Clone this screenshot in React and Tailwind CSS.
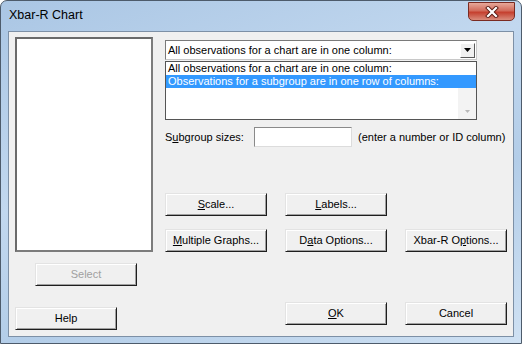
import React from "react"

const font = { fontFamily: '"Liberation Sans", Arial, sans-serif' }

const Btn = ({ children, className = "", disabled = false }) => (
	<div
		className={
			"flex items-center justify-center w-[102px] h-[23px] bg-[#f0f0f0] border border-t-[#e3e3e3] border-l-[#e3e3e3] border-r-[#1e1e1e] border-b-[#1e1e1e] shadow-[inset_1px_1px_0_#ffffff,inset_-1px_-1px_0_#a0a0a0] text-[11px] leading-none " +
			(disabled ? "text-[#a0a0a0] " : "text-black ") +
			className
		}
	>
		{children}
	</div>
)

export default function App() {
	return (
		<div
			className="w-[522px] h-[344px] flex flex-col rounded-t-[7px] border border-[#4d5b6b] bg-[linear-gradient(160deg,#aac6e4_0%,#c2d8ef_40%,#b3cde8_65%,#cfe1f3_100%)] overflow-hidden"
			style={font}
		>
			{/* Title bar */}
			<div className="h-[30px] flex flex-row items-start flex-shrink-0">
				<span className="self-center pl-[8px] pb-[1px] text-[12.5px] text-black">Xbar-R Chart</span>
				<div className="ml-auto mr-[6px] mt-[1px] w-[47px] h-[19px] flex items-center justify-center rounded-b-[5px] border border-[#7a2b22] bg-[linear-gradient(to_bottom,#e7a89a_0%,#d26b5b_45%,#c5402f_55%,#d98c7c_100%)]">
					<svg width="14" height="12" viewBox="0 0 14 12">
						<path d="M3 2l8 8M11 2l-8 8" stroke="#5a1a12" strokeWidth="4" strokeLinecap="square" />
						<path d="M3 2l8 8M11 2l-8 8" stroke="#ffffff" strokeWidth="2.2" strokeLinecap="square" />
					</svg>
				</div>
			</div>

			{/* Client */}
			<div className="flex-1 px-[7px] pb-[6px] flex">
				<div className="flex-1 flex flex-row bg-[#f0f0f0] border border-[#7d90a6] pt-[5px] pl-[6px] text-[11px] text-black">

					{/* LHS */}
					<div className="flex flex-col w-[138px] flex-shrink-0">
						<div className="w-[138px] h-[215px] bg-white border-2 border-t-[#6a6a6a] border-l-[#6a6a6a] border-r-[#7c7c7c] border-b-[#7c7c7c]" />
						<Btn disabled className="mt-[11px] ml-[20px]">Select</Btn>
						<Btn className="mt-[21px]">Help</Btn>
					</div>

					{/* RHS */}
					<div className="ml-[12px] flex flex-col">
						<div className="relative mt-[3px] w-[312px] h-[20px] bg-white border border-t-[#7a7a7a] border-l-[#7a7a7a] border-r-[#c8c8c8] border-b-[#c8c8c8] flex items-center">
							<span className="pl-[2px]">All observations for a chart are in one column:</span>
							<div className="ml-auto mr-[1px] w-[15px] h-[15px] flex items-center justify-center bg-[#f0f0f0] border border-t-[#ffffff] border-l-[#ffffff] border-r-[#5a5a5a] border-b-[#5a5a5a]">
								<svg width="7" height="4" viewBox="0 0 7 4">
									<path d="M0 0h7L3.5 4z" fill="#000" />
								</svg>
							</div>

							{/* Dropdown list */}
							<div className="absolute left-[-1px] top-[20px] w-[312px] h-[59px] bg-white border border-[#555555] flex flex-col z-10">
								<div className="h-[13px] leading-[13px] pl-[2px]">All observations for a chart are in one column:</div>
								<div className="h-[13px] leading-[13px] pl-[2px] bg-[#3399ff] text-white">Observations for a subgroup are in one row of columns:</div>
								<div className="flex-1 flex flex-row">
									<div className="flex-1" />
									<div className="w-[18px] bg-[#f3f3f3] flex flex-col justify-end items-center pb-[6px]">
										<svg width="5" height="3" viewBox="0 0 5 3">
											<path d="M0 0h5L2.5 3z" fill="#b8b8b8" />
										</svg>
									</div>
								</div>
							</div>
						</div>

						<div className="mt-[67px] flex flex-row items-center">
							<span className="w-[89px]">S<span className="underline">u</span>bgroup sizes:</span>
							<div className="w-[98px] h-[20px] bg-white border border-t-[#8a8a8a] border-l-[#8a8a8a] border-r-[#dcdcdc] border-b-[#dcdcdc]" />
							<span className="ml-[6px]">(enter a number or ID column)</span>
						</div>

						<div className="mt-[46px] flex flex-row gap-[18px]">
							<Btn><span className="underline">S</span>cale...</Btn>
							<Btn><span className="underline">L</span>abels...</Btn>
						</div>
						<div className="mt-[13px] flex flex-row gap-[18px]">
							<Btn><span className="underline">M</span>ultiple Graphs...</Btn>
							<Btn>D<span className="underline">a</span>ta Options...</Btn>
							<Btn>Xbar-R O<span className="underline">p</span>tions...</Btn>
						</div>

						<div className="mt-[50px] ml-[120px] flex flex-row gap-[18px]">
							<Btn><span className="underline">O</span>K</Btn>
							<Btn>Cancel</Btn>
						</div>
					</div>
				</div>
			</div>
		</div>
	)
}
